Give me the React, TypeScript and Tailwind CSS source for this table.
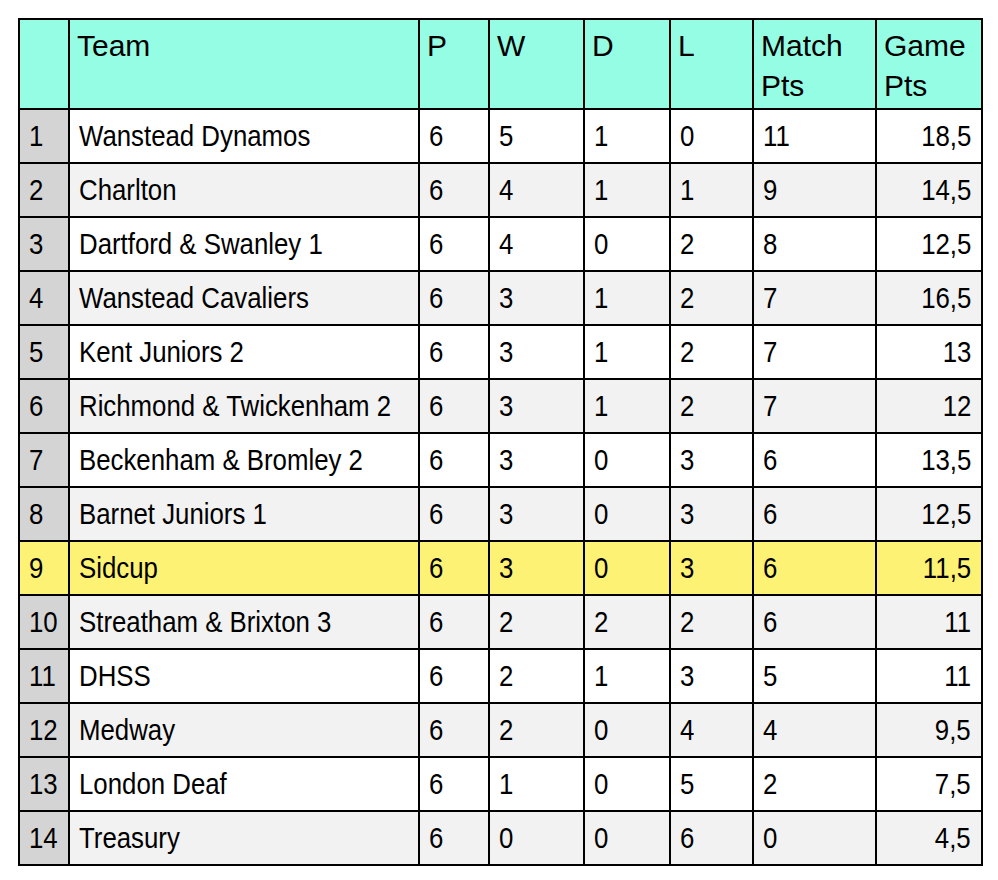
import React from 'react';

type Row = {
  pos: number;
  team: string;
  p: number;
  w: number;
  d: number;
  l: number;
  mp: number;
  gp: string;
};

const rows: Row[] = [
  { pos: 1, team: 'Wanstead Dynamos', p: 6, w: 5, d: 1, l: 0, mp: 11, gp: '18,5' },
  { pos: 2, team: 'Charlton', p: 6, w: 4, d: 1, l: 1, mp: 9, gp: '14,5' },
  { pos: 3, team: 'Dartford & Swanley 1', p: 6, w: 4, d: 0, l: 2, mp: 8, gp: '12,5' },
  { pos: 4, team: 'Wanstead Cavaliers', p: 6, w: 3, d: 1, l: 2, mp: 7, gp: '16,5' },
  { pos: 5, team: 'Kent Juniors 2', p: 6, w: 3, d: 1, l: 2, mp: 7, gp: '13' },
  { pos: 6, team: 'Richmond & Twickenham 2', p: 6, w: 3, d: 1, l: 2, mp: 7, gp: '12' },
  { pos: 7, team: 'Beckenham & Bromley 2', p: 6, w: 3, d: 0, l: 3, mp: 6, gp: '13,5' },
  { pos: 8, team: 'Barnet Juniors 1', p: 6, w: 3, d: 0, l: 3, mp: 6, gp: '12,5' },
  { pos: 9, team: 'Sidcup', p: 6, w: 3, d: 0, l: 3, mp: 6, gp: '11,5' },
  { pos: 10, team: 'Streatham & Brixton 3', p: 6, w: 2, d: 2, l: 2, mp: 6, gp: '11' },
  { pos: 11, team: 'DHSS', p: 6, w: 2, d: 1, l: 3, mp: 5, gp: '11' },
  { pos: 12, team: 'Medway', p: 6, w: 2, d: 0, l: 4, mp: 4, gp: '9,5' },
  { pos: 13, team: 'London Deaf', p: 6, w: 1, d: 0, l: 5, mp: 2, gp: '7,5' },
  { pos: 14, team: 'Treasury', p: 6, w: 0, d: 0, l: 6, mp: 0, gp: '4,5' },
];

const HIGHLIGHT = 'Sidcup';

function HeadCell({ children }: { children?: React.ReactNode }) {
  return (
    <div className="bg-[#95fde3] pl-[7px] pt-[6px] text-[30px] leading-[40px] text-black">
      {children}
    </div>
  );
}

function Cell({
  children,
  bg,
  right,
}: {
  children: React.ReactNode;
  bg: string;
  right?: boolean;
}) {
  return (
    <div
      className={
        bg +
        ' flex h-[52px] items-center text-[30px] leading-none text-black ' +
        (right ? 'justify-end pr-[10px]' : 'pl-[9px]')
      }
    >
      <span
        className={
          'inline-block whitespace-nowrap scale-x-[0.86] ' +
          (right ? 'origin-right' : 'origin-left')
        }
      >
        {children}
      </span>
    </div>
  );
}

export default function App() {
  return (
    <div className="min-h-screen bg-white pl-[18px] pt-[18px] font-['Liberation_Sans',Arial,sans-serif]">
      <div className="grid w-fit grid-cols-[48px_348px_68px_93px_84px_81px_121px_104px] gap-[2px] bg-black p-[2px]">
        <div className="h-[88px] bg-[#95fde3]" />
        <HeadCell>Team</HeadCell>
        <HeadCell>P</HeadCell>
        <HeadCell>W</HeadCell>
        <HeadCell>D</HeadCell>
        <HeadCell>L</HeadCell>
        <HeadCell>
          Match
          <br />
          Pts
        </HeadCell>
        <HeadCell>
          Game
          <br />
          Pts
        </HeadCell>

        {rows.map((r) => {
          const hi = r.team === HIGHLIGHT;
          const bg = hi ? 'bg-[#fef274]' : r.pos % 2 === 0 ? 'bg-[#f2f2f2]' : 'bg-white';
          const first = hi ? 'bg-[#fef274]' : 'bg-[#d4d4d4]';
          return (
            <React.Fragment key={r.pos}>
              <Cell bg={first}>{r.pos}</Cell>
              <Cell bg={bg}>{r.team}</Cell>
              <Cell bg={bg}>{r.p}</Cell>
              <Cell bg={bg}>{r.w}</Cell>
              <Cell bg={bg}>{r.d}</Cell>
              <Cell bg={bg}>{r.l}</Cell>
              <Cell bg={bg}>{r.mp}</Cell>
              <Cell bg={bg} right>
                {r.gp}
              </Cell>
            </React.Fragment>
          );
        })}
      </div>
    </div>
  );
}
